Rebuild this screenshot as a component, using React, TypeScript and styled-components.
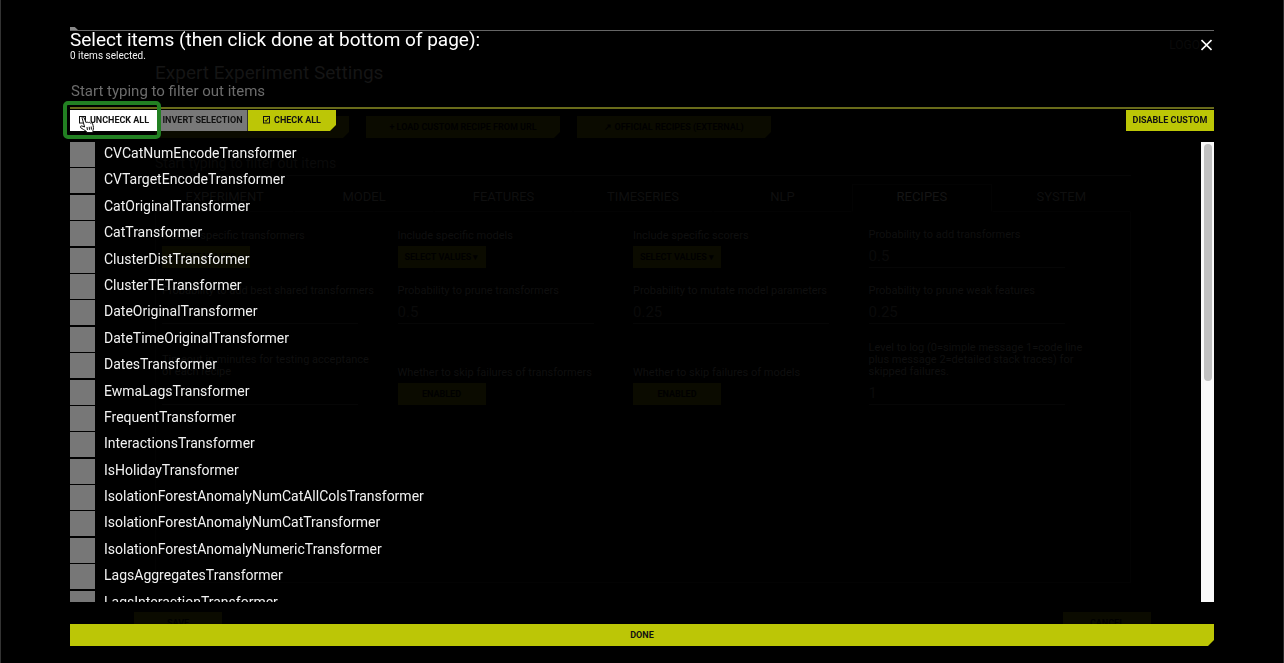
import React from "react";
import styled, { createGlobalStyle, css } from "styled-components";

const lime = "#bcc606";
const ghostText = "#0f0f0f";
const ghostLine = "#060606";
const ghostLime = "#0b0b00";

const GlobalStyle = createGlobalStyle`
  * { box-sizing: border-box; }
  body {
    margin: 0;
    background: #000;
    color: #f2f2f2;
    font-family: Roboto, "Liberation Sans", sans-serif;
    font-size: 14px;
  }
  button, input { font-family: inherit; border: 0; border-radius: 0; padding: 0; }
`;

const cutCorner = css`
  clip-path: polygon(0 0, 100% 0, 100% calc(100% - 6px), calc(100% - 6px) 100%, 0 100%);
`;

/* Settings page, almost hidden by the overlay */

const Page = styled.main`
  display: flex;
  flex-direction: column;
  height: 100vh;
  overflow: hidden;
  padding: 38px 132px 29px 133px;
  border-left: 1px solid #333;
  border-right: 1px solid #2a2a2a;
  color: ${ghostText};
`;

const Logout = styled.div`
  align-self: flex-end;
  margin-right: -64px;
  line-height: 14px;
  font-size: 12px;
  color: #0a0a0a;
`;

const Settings = styled.section`
  flex: 1;
  display: flex;
  flex-direction: column;
  padding: 8px 20px 0 21px;
`;

const SettingsTitle = styled.h1`
  margin: 0 0 30px;
  font-size: 19px;
  font-weight: 400;
  line-height: 26px;
  color: #151515;
`;

const GhostButton = styled.button<{ $width: number; $cut?: boolean }>`
  width: ${(p) => p.$width}px;
  height: 22px;
  background: ${ghostLime};
  color: #000;
  font-size: 9px;
  font-weight: 700;
  ${(p) => p.$cut && cutCorner}
`;

const RecipeBar = styled.div`
  display: flex;
  gap: 17px;
`;

const GhostFilter = styled.div`
  margin-top: 16px;
  height: 22px;
  line-height: 18px;
  color: #0a0a0a;
  border-bottom: 1px solid ${ghostLine};
`;

const Tabs = styled.nav`
  display: grid;
  grid-template-columns: repeat(7, 1fr);
  margin-top: 8px;
`;

const Tab = styled.a<{ $active?: boolean }>`
  height: 28px;
  line-height: 24px;
  font-size: 13px;
  text-align: center;
  text-decoration: none;
  color: ${(p) => (p.$active ? "#151515" : ghostText)};
  border: 1px solid ${(p) => (p.$active ? "#030303" : "transparent")};
  border-bottom-color: ${(p) => (p.$active ? "transparent" : "#030303")};
`;

const Panel = styled.div`
  flex: 1;
  display: grid;
  grid-template-columns: repeat(4, 1fr);
  grid-template-rows: 56px 56px 81px;
  align-items: end;
  padding-left: 6px;
  padding-right: 26px;
  border: 1px solid #030303;
  border-top: 0;
  margin-bottom: 29px;
`;

const Field = styled.label`
  display: flex;
  flex-direction: column;
  align-items: flex-start;
  gap: 4px;
  padding-right: 19px;
  font-size: 11px;
  line-height: 12px;
`;

const GhostInput = styled.input`
  width: 196px;
  height: 23px;
  background: transparent;
  color: #0a0a0a;
  font-size: 15px;
  border-bottom: 1px solid ${ghostLine};
`;

const Footer = styled.footer`
  display: flex;
  justify-content: space-between;
`;

/* Item picker */

const Dialog = styled.div`
  position: fixed;
  inset: 0;
  display: flex;
  flex-direction: column;
  padding: 27px 70px 17px;
`;

const Notch = styled.div`
  width: 8px;
  height: 3px;
  background: #888;
  clip-path: polygon(0 0, 60% 0, 100% 100%, 0 100%);
`;

const Head = styled.header`
  display: flex;
  justify-content: space-between;
  align-items: flex-start;
  border-top: 1px solid #666;
`;

const Title = styled.h2`
  margin: 0;
  font-size: 19px;
  font-weight: 400;
  line-height: 18px;
  color: #fff;
`;

const Count = styled.p`
  margin: 0;
  font-size: 10px;
  line-height: 13px;
`;

const Close = styled.button`
  display: flex;
  margin: 8px 2px 0 0;
  background: transparent;
  color: #fff;
`;

const Filter = styled.input`
  width: 100%;
  height: 34px;
  margin-top: 13px;
  padding-left: 1px;
  background: transparent;
  color: #fff;
  font-size: 15px;
  border-bottom: 2px solid #696b1a;
  outline: 0;
  &::placeholder { color: #6c6c6c; opacity: 1; }
`;

const Toolbar = styled.div`
  display: flex;
  margin-top: 1px;
`;

const Tool = styled.button<{ $tone?: "plain" | "grey"; $cut?: boolean; $end?: boolean }>`
  display: flex;
  align-items: center;
  justify-content: center;
  gap: 4px;
  width: 88px;
  height: 21px;
  padding-bottom: 1px;
  font-size: 9px;
  font-weight: 700;
  white-space: nowrap;
  color: #111;
  background: ${(p) => (p.$tone === "plain" ? "#fff" : p.$tone === "grey" ? "#787878" : lime)};
  ${(p) => p.$tone === "grey" && "width: 90px; border-right: 1px solid #333;"}
  ${(p) => p.$end && "margin-left: auto;"}
  ${(p) => p.$cut && cutCorner}
`;

const Highlight = styled.div`
  position: relative;
  &::after {
    content: "";
    position: absolute;
    inset: -9px -3px -8px -7px;
    border: 4px solid #228022;
    border-radius: 5px;
    pointer-events: none;
  }
`;

const Pointer = styled.svg`
  position: absolute;
  left: 9px;
  top: 6px;
  z-index: 1;
`;

const ListArea = styled.div`
  flex: 1;
  min-height: 0;
  display: flex;
  margin: 11px 0 22px;
`;

const Scroller = styled.div`
  flex: 1;
  overflow-y: auto;
  scrollbar-width: none;
`;

const List = styled.ul`
  display: grid;
  grid-auto-rows: 1fr;
  height: 475px;
  margin: 0;
  padding: 0;
  list-style: none;
`;

const ItemLabel = styled.label`
  display: flex;
  gap: 9px;
  line-height: 22px;
`;

const Check = styled.input`
  appearance: none;
  width: 25px;
  height: 25px;
  margin: 0;
  background: #777;
  &:checked { background: ${lime}; }
`;

const Track = styled.div`
  width: 13px;
  padding: 2px 2px 2px 3px;
  background: #fafafa;
`;

const Thumb = styled.div`
  width: 8px;
  height: 52%;
  border-radius: 4px;
  background: #c1c1c1;
`;

const Done = styled.button`
  height: 22px;
  padding-bottom: 1px;
  background: ${lime};
  color: #111;
  font-size: 9px;
  font-weight: 700;
  ${cutCorner}
`;

const tabs = ["EXPERIMENT", "MODEL", "FEATURES", "TIMESERIES", "NLP", "RECIPES", "SYSTEM"];

const fields: { label: string; button?: string; value?: string }[] = [
  { label: "Include specific transformers", button: "SELECT VALUES ▾" },
  { label: "Include specific models", button: "SELECT VALUES ▾" },
  { label: "Include specific scorers", button: "SELECT VALUES ▾" },
  { label: "Probability to add transformers", value: "0.5" },
  { label: "Probability to add best shared transformers", value: "" },
  { label: "Probability to prune transformers", value: "0.5" },
  { label: "Probability to mutate model parameters", value: "0.25" },
  { label: "Probability to prune weak features", value: "0.25" },
  { label: "Timeout in minutes for testing acceptance of each recipe", value: "" },
  { label: "Whether to skip failures of transformers", button: "ENABLED" },
  { label: "Whether to skip failures of models", button: "ENABLED" },
  { label: "Level to log (0=simple message 1=code line plus message 2=detailed stack traces) for skipped failures.", value: "1" },
];

const items = [
  "CVCatNumEncodeTransformer",
  "CVTargetEncodeTransformer",
  "CatOriginalTransformer",
  "CatTransformer",
  "ClusterDistTransformer",
  "ClusterTETransformer",
  "DateOriginalTransformer",
  "DateTimeOriginalTransformer",
  "DatesTransformer",
  "EwmaLagsTransformer",
  "FrequentTransformer",
  "InteractionsTransformer",
  "IsHolidayTransformer",
  "IsolationForestAnomalyNumCatAllColsTransformer",
  "IsolationForestAnomalyNumCatTransformer",
  "IsolationForestAnomalyNumericTransformer",
  "LagsAggregatesTransformer",
  "LagsInteractionTransformer",
];

const BoxIcon = ({ checked }: { checked?: boolean }) => (
  <svg width="7" height="8" viewBox="0 0 7 8" fill="none" stroke="#111" aria-hidden="true">
    <rect x="0.5" y="0.5" width="6" height="6.5" />
    {checked && <path d="M1.8 4l1.2 1.4L5.4 2" />}
  </svg>
);

const HandPointer = () => (
  <Pointer width="16" height="18" viewBox="0 0 16 18" aria-hidden="true">
    <path
      d="M3.2 2.3C2.6 1 4.4 .3 5 1.6L7.2 6.7C7.5 5.8 8.9 5.9 9.2 6.9C9.7 6 11.1 6.1 11.4 7.2C12.1 6.4 13.4 6.7 13.6 7.9C14.5 10.5 14.8 12.5 13.9 14.5L14 16.5H8L7.3 15.3C5.5 14.3 3.5 12.9 1.7 11.7C.7 10.8 1.8 9.5 3 10L5.6 11Z"
      fill="#fff"
      stroke="#111"
      strokeLinejoin="round"
    />
    <path d="M8 11l.4 3M10.2 10.8l.3 3M12.2 10.6l.2 3" stroke="#111" fill="none" />
  </Pointer>
);

export default function App() {
  return (
    <>
      <GlobalStyle />
      <Page aria-hidden="true">
        <Logout>LOGOUT</Logout>
        <Settings>
          <SettingsTitle>Expert Experiment Settings</SettingsTitle>
          <RecipeBar>
            <GhostButton $width={194} $cut>+ UPLOAD CUSTOM RECIPE</GhostButton>
            <GhostButton $width={194} $cut>+ LOAD CUSTOM RECIPE FROM URL</GhostButton>
            <GhostButton $width={194} $cut>↗ OFFICIAL RECIPES (EXTERNAL)</GhostButton>
          </RecipeBar>
          <GhostFilter>Start typing to filter out items</GhostFilter>
          <Tabs>
            {tabs.map((t) => (
              <Tab key={t} href="#" $active={t === "RECIPES"}>{t}</Tab>
            ))}
          </Tabs>
          <Panel>
            {fields.map((f) => (
              <Field key={f.label}>
                {f.label}
                {f.button ? (
                  <GhostButton $width={88}>{f.button}</GhostButton>
                ) : (
                  <GhostInput defaultValue={f.value} />
                )}
              </Field>
            ))}
          </Panel>
        </Settings>
        <Footer>
          <GhostButton $width={88}>SAVE</GhostButton>
          <GhostButton $width={88}>CANCEL</GhostButton>
        </Footer>
      </Page>
      <Dialog role="dialog" aria-labelledby="picker-title">
        <Notch />
        <Head>
          <div>
            <Title id="picker-title">Select items (then click done at bottom of page):</Title>
            <Count>0 items selected.</Count>
          </div>
          <Close aria-label="Close">
            <svg width="11" height="12" viewBox="0 0 11 12" stroke="currentColor" strokeWidth="1.6">
              <path d="M0.5 1l10 10M10.5 1l-10 10" />
            </svg>
          </Close>
        </Head>
        <Filter aria-label="Filter items" placeholder="Start typing to filter out items" />
        <Toolbar>
          <Highlight>
            <Tool $tone="plain"><BoxIcon /> UNCHECK ALL</Tool>
            <HandPointer />
          </Highlight>
          <Tool $tone="grey">INVERT SELECTION</Tool>
          <Tool $cut><BoxIcon checked /> CHECK ALL</Tool>
          <Tool $end>DISABLE CUSTOM</Tool>
        </Toolbar>
        <ListArea>
          <Scroller>
            <List>
              {items.map((name) => (
                <li key={name}>
                  <ItemLabel>
                    <Check type="checkbox" />
                    {name}
                  </ItemLabel>
                </li>
              ))}
            </List>
          </Scroller>
          <Track><Thumb /></Track>
        </ListArea>
        <Done>DONE</Done>
      </Dialog>
    </>
  );
}
